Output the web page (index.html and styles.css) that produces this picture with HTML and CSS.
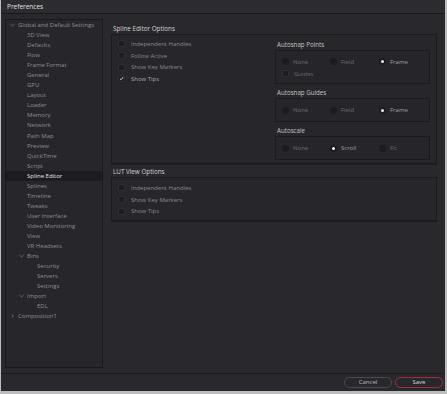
FILE: index.html
```html
<!DOCTYPE html>
<html lang="en">
<head>
  <meta charset="UTF-8">
  <title>Preferences</title>
  <link rel="stylesheet" href="styles.css">
</head>
<body>
  <div class="window">
    <div class="titlebar">Preferences</div>

    <div class="main">
      <div class="sidebar">
        <div class="item lvl0"><svg class="chev" viewBox="0 0 6 4"><path d="M0.5 0.8 L3 3.2 L5.5 0.8" /></svg>Global and Default Settings</div>
        <div class="item lvl1">3D View</div>
        <div class="item lvl1">Defaults</div>
        <div class="item lvl1">Flow</div>
        <div class="item lvl1">Frame Format</div>
        <div class="item lvl1">General</div>
        <div class="item lvl1">GPU</div>
        <div class="item lvl1">Layout</div>
        <div class="item lvl1">Loader</div>
        <div class="item lvl1">Memory</div>
        <div class="item lvl1">Network</div>
        <div class="item lvl1">Path Map</div>
        <div class="item lvl1">Preview</div>
        <div class="item lvl1">QuickTime</div>
        <div class="item lvl1">Script</div>
        <div class="item lvl1 selected">Spline Editor</div>
        <div class="item lvl1">Splines</div>
        <div class="item lvl1">Timeline</div>
        <div class="item lvl1">Tweaks</div>
        <div class="item lvl1">User Interface</div>
        <div class="item lvl1">Video Monitoring</div>
        <div class="item lvl1">View</div>
        <div class="item lvl1">VR Headsets</div>
        <div class="item lvl1 parent"><svg class="chev" viewBox="0 0 6 4"><path d="M0.5 0.8 L3 3.2 L5.5 0.8" /></svg>Bins</div>
        <div class="item lvl2">Security</div>
        <div class="item lvl2">Servers</div>
        <div class="item lvl2">Settings</div>
        <div class="item lvl1 parent"><svg class="chev" viewBox="0 0 6 4"><path d="M0.5 0.8 L3 3.2 L5.5 0.8" /></svg>Import</div>
        <div class="item lvl2">EDL</div>
        <div class="item lvl0"><svg class="chev" viewBox="0 0 6 4"><path d="M2 0.3 L4 2 L2 3.7" /></svg>Composition1</div>
      </div>

      <div class="content">
        <div class="group-label">Spline Editor Options</div>
        <div class="group spline">
          <div class="col-left">
            <div class="check-row"><span class="box"></span>Independent Handles</div>
            <div class="check-row"><span class="box"></span>Follow Active</div>
            <div class="check-row"><span class="box"></span>Show Key Markers</div>
            <div class="check-row on"><span class="box"><svg viewBox="0 0 7 7"><path d="M1.5 3.8 L3 5.2 L5.8 1.5" /></svg></span>Show Tips</div>
          </div>
          <div class="col-right">
            <div class="sub-label first">Autosnap Points</div>
            <div class="subbox tall">
              <div class="radio-row">
                <div class="radio"><span class="dot"></span>None</div>
                <div class="radio"><span class="dot"></span>Field</div>
                <div class="radio on"><span class="dot"></span>Frame</div>
              </div>
              <div class="radio-row">
                <div class="radio"><span class="box"></span>Guides</div>
              </div>
            </div>
            <div class="sub-label">Autosnap Guides</div>
            <div class="subbox">
              <div class="radio-row">
                <div class="radio"><span class="dot"></span>None</div>
                <div class="radio"><span class="dot"></span>Field</div>
                <div class="radio on"><span class="dot"></span>Frame</div>
              </div>
            </div>
            <div class="sub-label">Autoscale</div>
            <div class="subbox">
              <div class="radio-row">
                <div class="radio"><span class="dot"></span>None</div>
                <div class="radio on"><span class="dot"></span>Scroll</div>
                <div class="radio"><span class="dot"></span>Fit</div>
              </div>
            </div>
          </div>
        </div>

        <div class="group-label second">LUT View Options</div>
        <div class="group lut">
          <div class="col-left">
            <div class="check-row"><span class="box"></span>Independent Handles</div>
            <div class="check-row"><span class="box"></span>Show Key Markers</div>
            <div class="check-row"><span class="box"></span>Show Tips</div>
          </div>
        </div>
      </div>
    </div>

    <div class="footer">
      <button class="btn">Cancel</button>
      <button class="btn save">Save</button>
    </div>
  </div>
</body>
</html>
```

FILE: styles.css
```css
body {
  margin: 0;
  padding: 0 0 0 1px;
  background: #bdbdbd;
  font-family: 'Open Sans', 'DejaVu Sans', sans-serif;
  font-size: 6px;
}

.window {
  width: 444px;
  height: 391px;
  background: #28282d;
  display: flex;
  flex-direction: column;
  overflow: hidden;
}

.titlebar {
  height: 13px;
  line-height: 13px;
  padding-left: 6px;
  background: #2b2b30;
  border-bottom: 1px solid #1a1a1e;
  color: #e2e2e2;
  font-size: 6.5px;
}

.main {
  display: flex;
  height: 354px;
  padding: 5px 0 0 4px;
}

/* left tree */
.sidebar {
  width: 96px;
  height: 347px;
  background: #26262b;
  border: 1px solid #19191c;
  color: #8f8f8f;
}

.item {
  height: 10.06px;
  line-height: 10px;
  white-space: nowrap;
  position: relative;
}

.item.lvl0 { padding-left: 12px; }
.item.lvl1 { padding-left: 21px; }
.item.lvl2 { padding-left: 31px; }

.item.selected {
  background: #1c1c20;
  color: #e6e6e6;
}

.chev {
  position: absolute;
  width: 5px;
  height: 4px;
  top: 3px;
  left: 4px;
  fill: none;
  stroke: #8a8a8a;
  stroke-width: 0.8;
}

.item.parent .chev { left: 13px; }

/* right side */
.content {
  width: 326px;
  margin-left: 8px;
  padding-top: 4px;
}

.group-label {
  height: 11px;
  line-height: 11px;
  padding-left: 2px;
  color: #d2d2d2;
  font-size: 6.3px;
}

.group-label.second {
  margin-top: 2px;
}

.group {
  background: #26262b;
  border: 1px solid #1b1b1f;
  box-shadow: 0 1px 0 #1f1f23;
  display: flex;
}

.group.spline {
  height: 128px;
}

.group.lut {
  height: 42px;
}

.col-left {
  width: 152px;
  padding: 3px 0 0 6px;
}

.group.lut .col-left {
  padding-top: 4px;
}

.check-row {
  height: 11.7px;
  display: flex;
  align-items: center;
  color: #8a8a8a;
}

.box {
  width: 7px;
  height: 7px;
  box-sizing: border-box;
  background: #1d1d21;
  border: 1px solid #2f2f34;
  border-radius: 1px;
  margin-right: 6px;
  display: flex;
  align-items: center;
  justify-content: center;
  flex-shrink: 0;
}

.box svg {
  width: 7px;
  height: 7px;
  fill: none;
  stroke: #f0f0f0;
  stroke-width: 1.2;
}

.check-row.on {
  color: #a8a8a8;
}

.col-right {
  width: 155px;
  margin-left: 5px;
}

.sub-label {
  height: 11px;
  line-height: 11px;
  margin-top: 3px;
  padding-left: 2px;
  color: #c4c4c4;
  font-size: 6.2px;
}

.sub-label.first {
  margin-top: 4px;
}

.subbox {
  height: 22px;
  box-sizing: content-box;
  padding: 0;
  border: 1px solid #1b1b1f;
  background: #25252a;
  display: flex;
  flex-direction: column;
  justify-content: center;
}

.subbox.tall {
  height: 31px;
  padding-top: 1px;
}

.radio-row {
  height: 12px;
  display: grid;
  grid-template-columns: 48px 49px auto;
  padding-left: 6px;
}

.radio {
  display: flex;
  align-items: center;
  color: #6c6c6c;
}

.radio.on {
  color: #a0a0a0;
}

.radio .box {
  margin-right: 5px;
}

.dot {
  width: 7px;
  height: 7px;
  border-radius: 50%;
  background: #1c1c20;
  margin-right: 4px;
  display: flex;
  align-items: center;
  justify-content: center;
}

.radio.on .dot::after {
  content: "";
  width: 3px;
  height: 3px;
  border-radius: 50%;
  background: #f2f2f2;
}

/* bottom buttons */
.footer {
  flex: 1;
  border-top: 1px solid #1c1c20;
  display: flex;
  justify-content: flex-end;
  align-items: center;
  gap: 3px;
  padding-right: 2px;
}

.btn {
  width: 48px;
  height: 11px;
  padding: 0;
  border-radius: 6px;
  border: 1px solid #4a4a50;
  background: #27272c;
  color: #bdbdbd;
  font-family: 'Open Sans', sans-serif;
  font-size: 6px;
  line-height: 9px;
}

.btn.save {
  border-color: #a0313a;
  color: #d8d8d8;
}
```
